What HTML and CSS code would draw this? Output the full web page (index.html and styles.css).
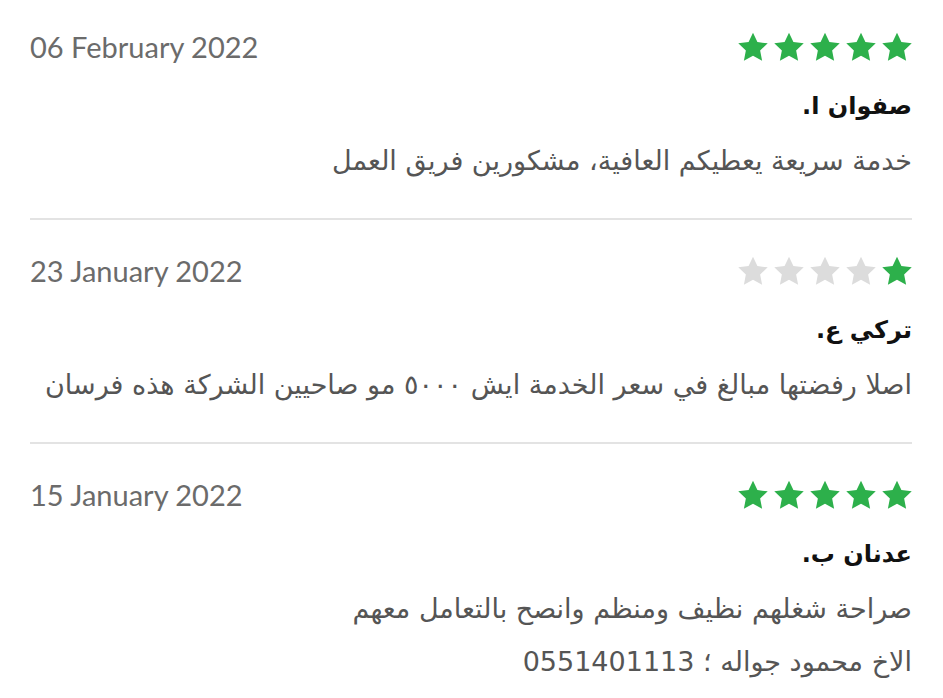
FILE: index.html
```html
<!DOCTYPE html>
<html lang="ar" dir="rtl">
<head>
<meta charset="utf-8">
<title>Reviews</title>
<link rel="stylesheet" href="styles.css">
</head>
<body>
<main class="reviews">
  <article class="review">
    <div class="top">
      <div class="stars">
        <svg class="star on" viewBox="0 0 24 24"><path d="M12 .5L15.53 8.05 23.79 9.07 17.71 14.75 19.29 22.93 12 18.9 4.71 22.93 6.29 14.75 .21 9.07 8.47 8.05z"/></svg>
        <svg class="star on" viewBox="0 0 24 24"><path d="M12 .5L15.53 8.05 23.79 9.07 17.71 14.75 19.29 22.93 12 18.9 4.71 22.93 6.29 14.75 .21 9.07 8.47 8.05z"/></svg>
        <svg class="star on" viewBox="0 0 24 24"><path d="M12 .5L15.53 8.05 23.79 9.07 17.71 14.75 19.29 22.93 12 18.9 4.71 22.93 6.29 14.75 .21 9.07 8.47 8.05z"/></svg>
        <svg class="star on" viewBox="0 0 24 24"><path d="M12 .5L15.53 8.05 23.79 9.07 17.71 14.75 19.29 22.93 12 18.9 4.71 22.93 6.29 14.75 .21 9.07 8.47 8.05z"/></svg>
        <svg class="star on" viewBox="0 0 24 24"><path d="M12 .5L15.53 8.05 23.79 9.07 17.71 14.75 19.29 22.93 12 18.9 4.71 22.93 6.29 14.75 .21 9.07 8.47 8.05z"/></svg>
      </div>
      <div class="date" dir="ltr">06 February 2022</div>
    </div>
    <div class="name">صفوان ا.</div>
    <p class="text">خدمة سريعة يعطيكم العافية، مشكورين فريق العمل</p>
  </article>
  <article class="review">
    <div class="top">
      <div class="stars">
        <svg class="star on" viewBox="0 0 24 24"><path d="M12 .5L15.53 8.05 23.79 9.07 17.71 14.75 19.29 22.93 12 18.9 4.71 22.93 6.29 14.75 .21 9.07 8.47 8.05z"/></svg>
        <svg class="star off" viewBox="0 0 24 24"><path d="M12 .5L15.53 8.05 23.79 9.07 17.71 14.75 19.29 22.93 12 18.9 4.71 22.93 6.29 14.75 .21 9.07 8.47 8.05z"/></svg>
        <svg class="star off" viewBox="0 0 24 24"><path d="M12 .5L15.53 8.05 23.79 9.07 17.71 14.75 19.29 22.93 12 18.9 4.71 22.93 6.29 14.75 .21 9.07 8.47 8.05z"/></svg>
        <svg class="star off" viewBox="0 0 24 24"><path d="M12 .5L15.53 8.05 23.79 9.07 17.71 14.75 19.29 22.93 12 18.9 4.71 22.93 6.29 14.75 .21 9.07 8.47 8.05z"/></svg>
        <svg class="star off" viewBox="0 0 24 24"><path d="M12 .5L15.53 8.05 23.79 9.07 17.71 14.75 19.29 22.93 12 18.9 4.71 22.93 6.29 14.75 .21 9.07 8.47 8.05z"/></svg>
      </div>
      <div class="date" dir="ltr">23 January 2022</div>
    </div>
    <div class="name">تركي ع.</div>
    <p class="text">اصلا رفضتها مبالغ في سعر الخدمة ايش ٥٠٠٠ مو صاحيين الشركة هذه فرسان</p>
  </article>
  <article class="review">
    <div class="top">
      <div class="stars">
        <svg class="star on" viewBox="0 0 24 24"><path d="M12 .5L15.53 8.05 23.79 9.07 17.71 14.75 19.29 22.93 12 18.9 4.71 22.93 6.29 14.75 .21 9.07 8.47 8.05z"/></svg>
        <svg class="star on" viewBox="0 0 24 24"><path d="M12 .5L15.53 8.05 23.79 9.07 17.71 14.75 19.29 22.93 12 18.9 4.71 22.93 6.29 14.75 .21 9.07 8.47 8.05z"/></svg>
        <svg class="star on" viewBox="0 0 24 24"><path d="M12 .5L15.53 8.05 23.79 9.07 17.71 14.75 19.29 22.93 12 18.9 4.71 22.93 6.29 14.75 .21 9.07 8.47 8.05z"/></svg>
        <svg class="star on" viewBox="0 0 24 24"><path d="M12 .5L15.53 8.05 23.79 9.07 17.71 14.75 19.29 22.93 12 18.9 4.71 22.93 6.29 14.75 .21 9.07 8.47 8.05z"/></svg>
        <svg class="star on" viewBox="0 0 24 24"><path d="M12 .5L15.53 8.05 23.79 9.07 17.71 14.75 19.29 22.93 12 18.9 4.71 22.93 6.29 14.75 .21 9.07 8.47 8.05z"/></svg>
      </div>
      <div class="date" dir="ltr">15 January 2022</div>
    </div>
    <div class="name">عدنان ب.</div>
    <p class="text">صراحة شغلهم نظيف ومنظم وانصح بالتعامل معهم<br>الاخ محمود جواله ؛ 0551401113</p>
  </article>
</main>
</body>
</html>
```
FILE: styles.css
```css
html, body {
  margin: 0;
  padding: 0;
  background: #ffffff;
}
body {
  font-family: "DejaVu Sans", "Noto Sans", sans-serif;
  overflow: hidden;
}
.reviews {
  padding: 0 31px 0 30px;
}
.review {
  padding: 37px 0 31px;
  border-bottom: 2px solid #e3e3e3;
}
.review:first-child {
  padding-top: 33px;
}
.top {
  display: flex;
  align-items: center;
  justify-content: space-between;
  height: 28px;
}
.stars {
  display: flex;
  gap: 6px;
}
.star {
  width: 30px;
  height: 30px;
  display: block;
}
.star.on { fill: #2db04b; }
.star.off { fill: #dcdcdc; }
.date {
  font-family: Lato, "Liberation Sans", sans-serif;
  font-size: 29px;
  color: #6b6b6b;
  line-height: 28px;
}
.name {
  margin-top: 25px;
  font-size: 24px;
  font-weight: bold;
  color: #111;
  line-height: 40px;
}
.text {
  margin: 8px 0 0;
  font-size: 27px;
  color: #555;
  line-height: 53px;
}
```
